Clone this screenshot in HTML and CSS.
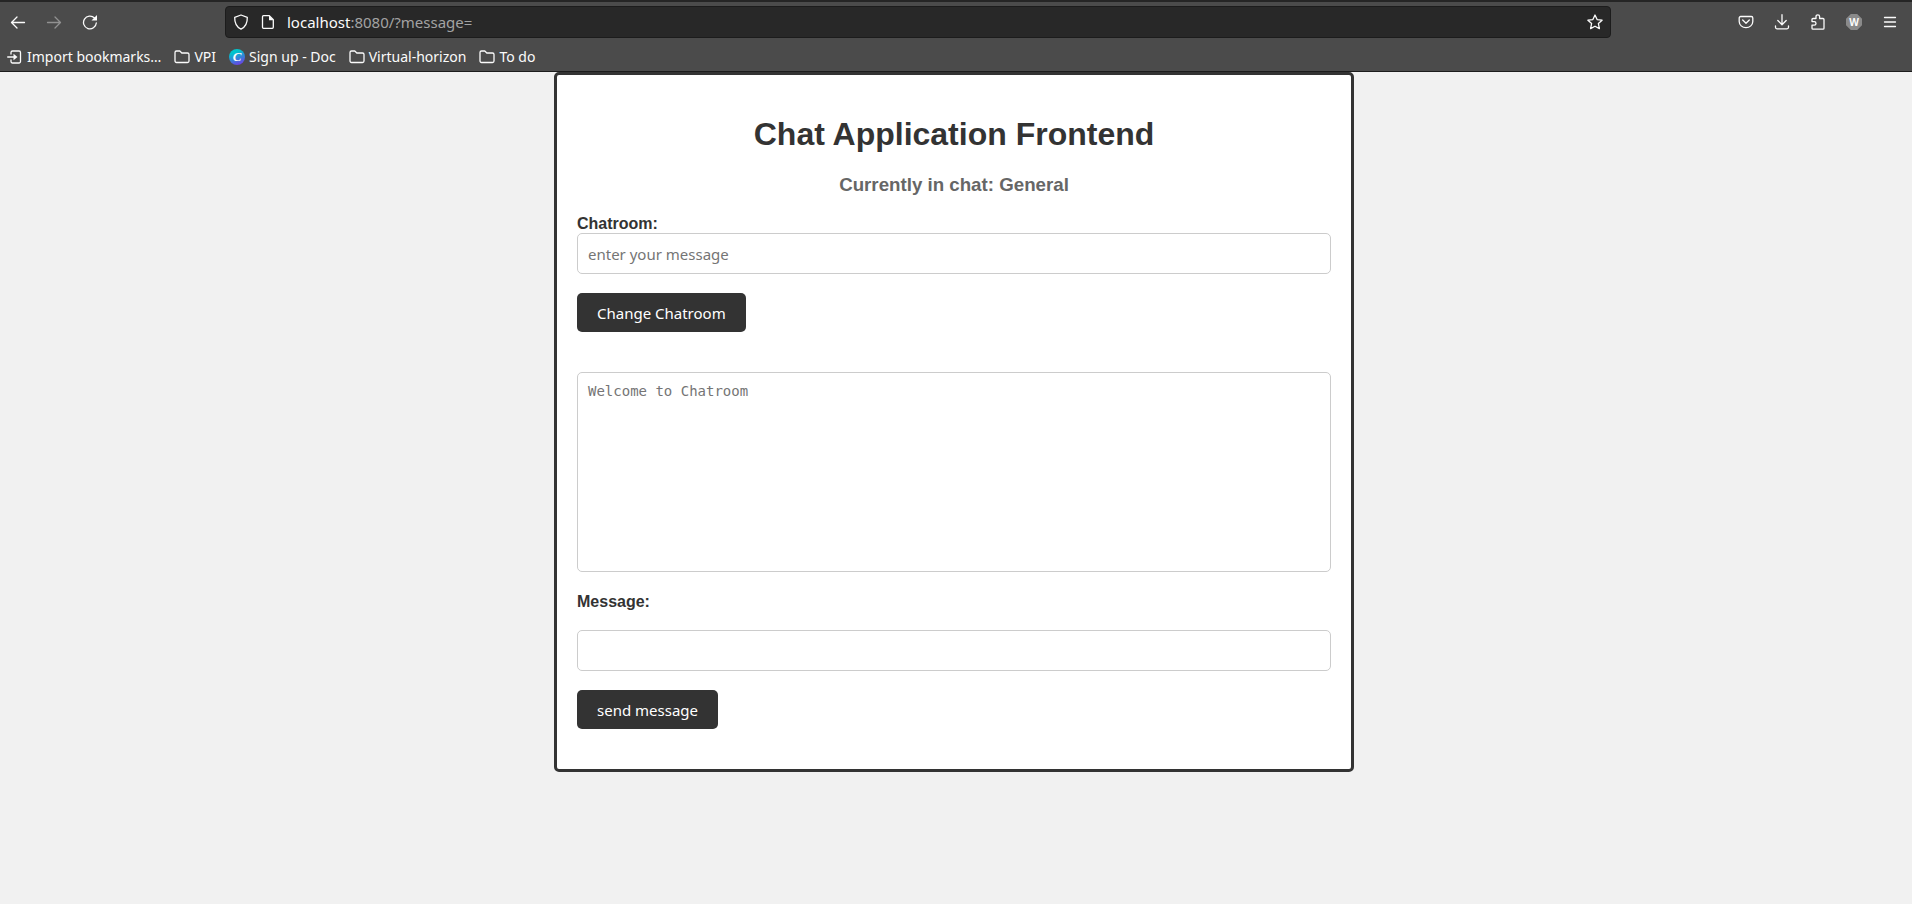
FILE: index.html
```html
<!DOCTYPE html>
<html lang="en">
<head>
<meta charset="utf-8">
<title>Chat Application Frontend</title>
<link rel="stylesheet" href="styles.css">
</head>
<body>
<header class="browser">
  <div class="navbar">
    <div class="nav-left">
      <button class="icon-btn" aria-label="Back"><svg class="icon" viewBox="0 0 16 16"><path d="M14.500 8.500H1.500M7 3 1.500 8.500 7 14"/></svg></button>
      <button class="icon-btn dim" aria-label="Forward"><svg class="icon" viewBox="0 0 16 16"><path d="M1.500 8.500h13M9 3l5.500 5.500L9 14"/></svg></button>
      <button class="icon-btn" aria-label="Reload"><svg class="icon" viewBox="0 0 16 16"><path d="M14.300 9A6.400 6.400 0 1 1 12.500 4"/><path class="solid" d="M15 1v5.500H9.500z"/></svg></button>
    </div>
    <div class="urlbar">
      <svg class="icon" viewBox="0 0 16 16"><path d="M8 1 14.300 3.300C14.500 9 12.500 13 8 15.200 3.500 13 1.500 9 1.700 3.300z"/></svg>
      <svg class="icon" viewBox="0 0 16 16"><path d="M3.500 1.700h5.800l4 4v7.600a1 1 0 0 1-1 1H3.500a1 1 0 0 1-1-1V2.700a1 1 0 0 1 1-1z"/><path class="solid" d="M9 1.500v4.700h4.700z"/></svg>
      <span class="url"><span class="host">localhost</span>:8080/?message=</span>
      <svg class="icon" viewBox="0 0 16 16"><path d="m8 1 2.100 4.600 5 .600-3.700 3.400 1 5L8 12.200l-4.400 2.400 1-5L.9 6.200l5-.600z"/></svg>
    </div>
    <div class="nav-right">
      <button class="icon-btn" aria-label="Save to Pocket"><svg class="icon" viewBox="0 0 16 16"><path d="M2.700 2.500h10.600a1.500 1.500 0 0 1 1.500 1.500v3.500a6.800 6.200 0 0 1-13.600 0V4a1.500 1.500 0 0 1 1.500-1.500zM4.700 6 8 9.200 11.300 6"/></svg></button>
      <button class="icon-btn" aria-label="Downloads"><svg class="icon" viewBox="0 0 16 16"><path d="M8 .7v10M3.800 6.500 8 10.700l4.200-4.200M1.500 12v1.300a1.500 1.500 0 0 0 1.500 1.500h10a1.500 1.500 0 0 0 1.500-1.500V12"/></svg></button>
      <button class="icon-btn" aria-label="Extensions"><svg class="icon" viewBox="0 0 16 16"><path d="M2 7.200V5.500a1 1 0 0 1 1-1h3V2.600a1.800 1.800 0 0 1 3.600 0v1.900H13a1 1 0 0 1 1 1v8.700a1 1 0 0 1-1 1H3a1 1 0 0 1-1-1v-3h2.200a1.800 1.800 0 0 0 0-3.600H2z"/></svg></button>
      <button class="icon-btn" aria-label="Extension W"><span class="badge">W</span></button>
      <button class="icon-btn" aria-label="Menu"><svg class="icon" viewBox="0 0 16 16"><path d="M2.500 3.500h11M2.500 8h11M2.500 12.500h11"/></svg></button>
    </div>
  </div>
  <nav class="bookmarks">
    <a class="bookmark" href="#"><svg class="icon" viewBox="0 0 16 16"><path d="M4 5V3.500A1.500 1.500 0 0 1 5.500 2H12a1.500 1.500 0 0 1 1.500 1.500v9A1.500 1.500 0 0 1 12 14H5.500A1.500 1.500 0 0 1 4 12.500V11M.7 8H8"/><path class="solid" d="M6.500 4.800 10.500 8l-4 3.200z"/></svg>Import bookmarks…</a>
    <a class="bookmark" href="#"><svg class="icon" viewBox="0 0 16 16"><path d="M2.500 2h3.300l2 2h5.700a1.500 1.500 0 0 1 1.500 1.500v6.500a1.500 1.500 0 0 1-1.500 1.500h-11A1.500 1.500 0 0 1 1 12V3.500A1.500 1.500 0 0 1 2.500 2z"/></svg>VPI</a>
    <a class="bookmark" href="#"><span class="favicon">C</span>Sign up - Doc</a>
    <a class="bookmark" href="#"><svg class="icon" viewBox="0 0 16 16"><path d="M2.500 2h3.300l2 2h5.700a1.500 1.500 0 0 1 1.500 1.500v6.500a1.500 1.500 0 0 1-1.500 1.500h-11A1.500 1.500 0 0 1 1 12V3.500A1.500 1.500 0 0 1 2.500 2z"/></svg>Virtual-horizon</a>
    <a class="bookmark" href="#"><svg class="icon" viewBox="0 0 16 16"><path d="M2.500 2h3.300l2 2h5.700a1.500 1.500 0 0 1 1.500 1.500v6.500a1.500 1.500 0 0 1-1.500 1.500h-11A1.500 1.500 0 0 1 1 12V3.500A1.500 1.500 0 0 1 2.500 2z"/></svg>To do</a>
  </nav>
</header>
<main class="page">
  <section class="card">
    <h1 class="title">Chat Application Frontend</h1>
    <h3 class="subtitle">Currently in chat: General</h3>
    <form class="form">
      <label class="label" for="room">Chatroom:</label>
      <input class="field" id="room" type="text" placeholder="enter your message">
      <button class="button" type="button">Change Chatroom</button>
    </form>
    <textarea class="log" aria-label="Chat messages" placeholder="Welcome to Chatroom"></textarea>
    <form class="form">
      <label class="label spaced" for="message">Message:</label>
      <input class="field" id="message" type="text">
      <button class="button" type="button">send message</button>
    </form>
  </section>
</main>
</body>
</html>
```

FILE: styles.css
```css
* { box-sizing: border-box; }

body {
  margin: 0;
  min-height: 100vh;
  background: #f1f1f1;
  font-family: "Liberation Sans", Arial, sans-serif;
  color: #333;
}

.browser {
  background: #4b4b4b;
  border-top: 2px solid #252525;
  border-bottom: 1px solid #1c1c1c;
  color: #fbfbfb;
  font-family: "Noto Sans", sans-serif;
  font-size: 14px;
}

.navbar {
  display: grid;
  grid-template-columns: 225px minmax(0, 1fr) 301px;
  align-items: center;
  height: 40px;
}

.nav-left,
.nav-right {
  display: flex;
}

.nav-right {
  justify-content: flex-end;
  padding-right: 4px;
}

.icon-btn {
  display: flex;
  align-items: center;
  justify-content: center;
  width: 36px;
  height: 32px;
  padding: 0;
  border: 0;
  background: none;
  color: inherit;
}

.dim { opacity: 0.4; }

.icon {
  flex: none;
  width: 16px;
  height: 16px;
  fill: none;
  stroke: currentColor;
  stroke-width: 1.3;
  stroke-linecap: round;
  stroke-linejoin: round;
}

.solid {
  fill: currentColor;
  stroke: none;
}

.urlbar {
  display: flex;
  align-items: center;
  gap: 11px;
  height: 32px;
  padding: 0 7px;
  border: 1px solid #1c1c1c;
  border-radius: 4px;
  background: #282828;
}

.url {
  flex: 1;
  color: #a3a3a3;
  font-size: 15px;
}

.host { color: #fbfbfb; }

.badge {
  width: 16px;
  height: 16px;
  background: #8a8a8a;
  clip-path: polygon(30% 0, 70% 0, 100% 30%, 100% 70%, 70% 100%, 30% 100%, 0 70%, 0 30%);
  font: bold 10px/16px "Open Sans", sans-serif;
}

.bookmarks {
  display: flex;
  align-items: center;
  gap: 13px;
  height: 29px;
  padding: 0 7px;
}

.bookmark {
  display: flex;
  align-items: center;
  gap: 4px;
  color: inherit;
  text-decoration: none;
  white-space: nowrap;
}

.favicon {
  width: 16px;
  height: 16px;
  border-radius: 50%;
  background: linear-gradient(160deg, #00c4cc 25%, #7d2ae8);
  font: italic bold 13px/16px "Liberation Serif", serif;
  text-align: center;
}

.page { padding-right: 4px; }

.card {
  max-width: 800px;
  margin: 0 auto;
  padding: 20px;
  border: 3px solid #333;
  border-radius: 5px;
  background: #fff;
}

.title {
  margin: 21px 0;
  font-size: 32px;
  line-height: 37px;
  text-align: center;
}

.subtitle {
  margin: 0 0 20px;
  color: #666;
  line-height: 21px;
  text-align: center;
}

.form {
  display: flex;
  flex-direction: column;
  align-items: flex-start;
}

.label {
  font-size: 16px;
  font-weight: bold;
  line-height: 18px;
}

.spaced { margin: 21px 0 19px; }

.field,
.log {
  width: 100%;
  border: 1px solid #ccc;
  border-radius: 5px;
  background: #fff;
}

.field {
  height: 41px;
  margin-bottom: 19px;
  padding: 0 10px;
  font: 15px "Noto Sans", sans-serif;
}

.field::placeholder,
.log::placeholder { color: #757575; }

.log {
  display: block;
  height: 200px;
  margin-top: 40px;
  padding: 10px;
  font: 14px "DejaVu Sans Mono", monospace;
  resize: none;
}

.button {
  height: 39px;
  padding: 0 20px;
  border: 0;
  border-radius: 5px;
  background: #333;
  color: #fff;
  font: 15px "Noto Sans", sans-serif;
}

.form:last-child { margin-bottom: 20px; }
```
